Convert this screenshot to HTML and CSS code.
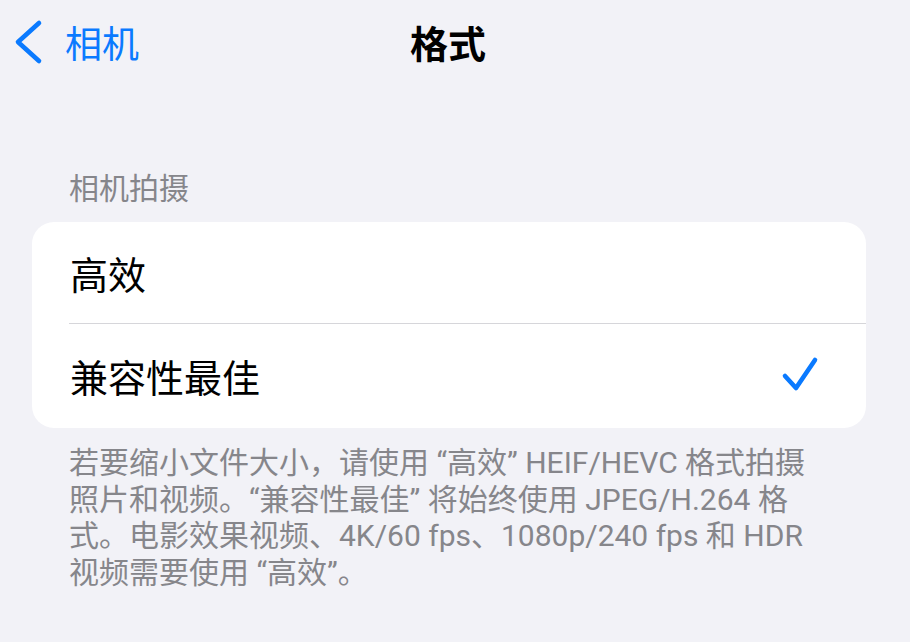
FILE: index.html
```html
<!DOCTYPE html>
<html lang="zh-CN">
<head>
<meta charset="utf-8">
<title>格式</title>
<link rel="stylesheet" href="styles.css">
</head>
<body>
<header class="nav">
  <a class="back">
    <svg class="chev" width="30" height="46" viewBox="0 0 30 46"><path d="M25 4 L4 23 L25 42" fill="none" stroke="#0a7aff" stroke-width="4.6" stroke-linecap="round" stroke-linejoin="round"/></svg>
    <span class="back-label">相机</span>
  </a>
  <h1 class="title">格式</h1>
  <div></div>
</header>
<main>
  <div class="section-header">相机拍摄</div>
  <div class="card">
    <div class="row"><span class="row-label">高效</span></div>
    <div class="divider"></div>
    <div class="row"><span class="row-label">兼容性最佳</span>
      <svg class="check" width="40" height="40" viewBox="0 0 40 40"><path d="M4 20 L15 32 L34 4" fill="none" stroke="#0a7aff" stroke-width="4.6" stroke-linecap="round" stroke-linejoin="round"/></svg>
    </div>
  </div>
  <div class="footer">
    <span class="line">若要缩小文件大小，请使用 “高效” HEIF/HEVC 格式拍摄</span>
    <span class="line">照片和视频。“兼容性最佳” 将始终使用 JPEG/H.264 格</span>
    <span class="line">式。电影效果视频、4K/60 fps、1080p/240 fps 和 HDR</span>
    <span class="line">视频需要使用 “高效”。</span>
  </div>
</main>
</body>
</html>
```
FILE: styles.css
```css
* { box-sizing: border-box; }
html, body { margin: 0; padding: 0; }
body {
  background: #f2f2f7;
  font-family: "Noto Sans CJK SC", "Noto Sans", sans-serif;
  width: 910px;
  height: 642px;
  overflow: hidden;
  color: #000;
}
.nav {
  height: 84px;
  display: grid;
  grid-template-columns: 1fr auto 1fr;
  align-items: center;
  padding-right: 14px;
}
.back {
  display: flex;
  align-items: center;
  color: #0a7aff;
  padding-left: 14px;
}
.chev { display: block; margin-right: 21px; }
.back-label { font-size: 37px; line-height: 44px; }
.title {
  margin: 0;
  font-size: 38px;
  font-weight: 700;
  line-height: 44px;
}
.section-header {
  margin-top: 84px;
  padding-left: 69px;
  font-size: 30px;
  line-height: 36px;
  color: #86868b;
}
.card {
  margin: 18px 44px 0 32px;
  background: #fff;
  border-radius: 22px;
}
.row {
  height: 101px;
  display: flex;
  align-items: center;
  justify-content: space-between;
  padding: 0 45px 0 38px;
}
.row + .divider + .row { height: 104px; }
.row-label { font-size: 38px; line-height: 44px; }
.divider {
  height: 1px;
  background: #d6d6da;
  margin-left: 37px;
}
.check { display: block; }
.footer {
  margin-top: 17px;
  padding-left: 69px;
  font-family: "Roboto", "Noto Sans CJK SC", sans-serif;
  font-size: 30px;
  line-height: 36.5px;
  color: #86868b;
}
.line { display: block; white-space: nowrap; }
```
